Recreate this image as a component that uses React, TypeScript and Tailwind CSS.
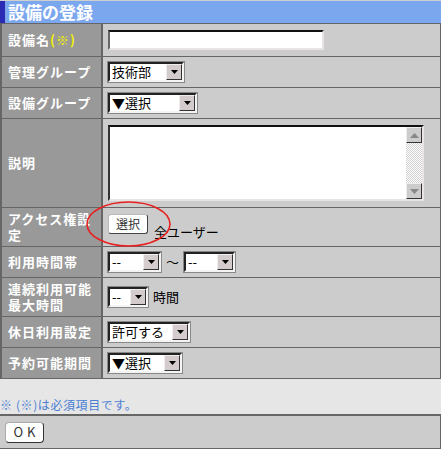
import React from 'react';

const FONT = { fontFamily: '"Noto Sans CJK JP", "Noto Sans", sans-serif' };

// Windows-classic looking select box
function Select({ text, width }: { text: string; width: number }) {
  return (
    <div
      className="flex h-[20px] bg-white border-2 border-t-[#222] border-l-[#222] border-b-[#f4f4f4] border-r-[#f4f4f4] outline outline-1 outline-[#888]"
      style={{ width }}
    >
      <div className="flex-1 pl-[2px] text-[13px] leading-[16px] text-black whitespace-nowrap">{text}</div>
      <div className="w-[16px] h-[16px] bg-[#d4cccc] border border-t-[#eee] border-l-[#eee] border-b-[#333] border-r-[#333] flex items-center justify-center">
        <svg width="7" height="4" viewBox="0 0 7 4">
          <path d="M0 0h7L3.5 4z" fill="#000" />
        </svg>
      </div>
    </div>
  );
}

function Row({ label, height, children }: { label: React.ReactNode; height: number; children?: React.ReactNode }) {
  return (
    <div className="flex border-b border-[#666]" style={{ height }}>
      <div className="w-[103px] shrink-0 bg-[#999999] border-l-2 border-r-2 border-[#666] flex items-center pl-[6px] text-white font-bold text-[13px] tracking-[1px] leading-[16px]">
        {label}
      </div>
      <div className="flex-1 bg-[#cccccc] flex items-center pl-[5px] gap-[5px] text-[13px] text-black">{children}</div>
    </div>
  );
}

export default function App() {
  return (
    <div className="relative w-[441px] h-[449px] bg-[#cccccc] overflow-hidden" style={FONT}>
      {/* Title */}
      <div className="flex h-[23px] border-t border-[#cfcfcf] bg-[#7ba7ef]">
        <div className="w-[5px] bg-[#2a2ab4]" />
        <div className="pl-[3px] text-white font-bold text-[17px] leading-[22px]">設備の登録</div>
      </div>

      <div className="border-t border-r border-[#666]">
        <Row label={<span>設備名<span className="text-[#f2f200]">(※)</span></span>} height={33}>
          <div className="w-[216px] h-[20px] bg-white border-2 border-t-[#111] border-l-[#666] border-b-[#e8e4e4] border-r-[#e8e4e4]" />
        </Row>
        <Row label="管理グループ" height={31}>
          <Select text="技術部" width={76} />
        </Row>
        <Row label="設備グループ" height={31}>
          <Select text="▼選択" width={89} />
        </Row>
        <Row label="説明" height={89}>
          <div className="w-[316px] h-[76px] bg-white border-2 border-t-[#111] border-l-[#333] border-b-[#e8e4e4] border-r-[#e8e4e4] flex justify-end">
            <div className="w-[16px] h-full flex flex-col bg-[repeating-conic-gradient(#d0d0d0_0_25%,#ffffff_0_50%)] bg-[length:2px_2px]">
              <div className="h-[16px] bg-[#cccccc] border border-t-[#eee] border-l-[#eee] border-b-[#333] border-r-[#333] flex items-center justify-center">
                <svg width="9" height="5" viewBox="0 0 9 5">
                  <path d="M4.5 0L9 5H0z" fill="#888" />
                </svg>
              </div>
              <div className="flex-1" />
              <div className="h-[16px] bg-[#cccccc] border border-t-[#eee] border-l-[#eee] border-b-[#333] border-r-[#333] flex items-center justify-center">
                <svg width="9" height="5" viewBox="0 0 9 5">
                  <path d="M0 0h9L4.5 5z" fill="#888" />
                </svg>
              </div>
            </div>
          </div>
        </Row>
        <Row label={<span>アクセス権設<br />定</span>} height={39}>
          <button className="w-[40px] h-[20px] mt-[-6px] rounded-[3px] bg-white border border-t-[#bbb] border-l-[#bbb] border-b-[#444] border-r-[#444] text-[12px] leading-[16px] text-[#333]">
            選択
          </button>
          <span className="mt-[10px] ml-px leading-[16px]">全ユーザー</span>
        </Row>
        <Row label="利用時間帯" height={31}>
          <Select text="--" width={53} />
          <span className="text-[13px] leading-[16px]">〜</span>
          <Select text="--" width={51} />
        </Row>
        <Row label={<span>連続利用可能<br />最大時間</span>} height={39}>
          <Select text="--" width={40} />
          <span>時間</span>
        </Row>
        <Row label="休日利用設定" height={31}>
          <Select text="許可する" width={82} />
        </Row>
        <Row label="予約可能期間" height={31}>
          <Select text="▼選択" width={74} />
        </Row>
      </div>

      {/* note */}
      <div className="h-[35px] bg-[#e6e6e6] flex items-end pb-[1px]">
        <span className="text-[12px] tracking-[0.6px] leading-[16px] text-[#4a7fd4]">※ (※)は必須項目です。</span>
      </div>

      {/* bottom bar */}
      <div className="h-[35px] bg-[#cccccc] border-t-2 border-b border-r border-[#666] flex items-center pl-[5px]">
        <button className="w-[39px] h-[21px] rounded-[4px] bg-white border border-t-[#aaa] border-l-[#aaa] border-b-[#333] border-r-[#333] text-[13px] leading-[16px] tracking-[4px] pl-[4px] text-[#333]">
          OK
        </button>
      </div>

      {/* red circle annotation */}
      <svg className="absolute left-[85px] top-[200px]" width="88" height="48" viewBox="0 0 88 48">
        <ellipse cx="43.5" cy="24" rx="41.5" ry="22" fill="none" stroke="#e82020" strokeWidth="1.6" />
      </svg>
    </div>
  );
}
